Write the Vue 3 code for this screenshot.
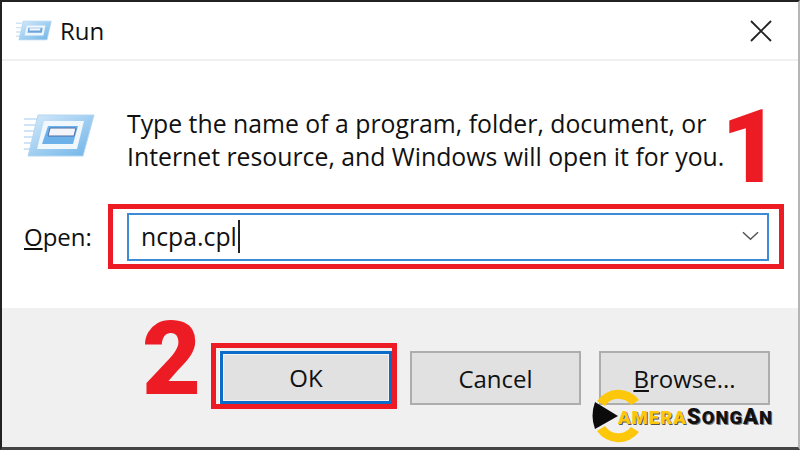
<template>
  <div class="dialog">
    <header class="titlebar">
      <svg class="run-icon small" viewBox="0 0 50 32">
        <defs>
          <linearGradient id="rg1" x1="0" y1="0" x2="1" y2="1">
            <stop offset="0" stop-color="#d6eafa" />
            <stop offset="1" stop-color="#6fb4e8" />
          </linearGradient>
        </defs>
        <path d="M0 6 H8 M0 12 H7 M0 18 H6 M0 24 H5" stroke="#cfe4f6" stroke-width="2" />
        <path d="M10 3 H49 L43 29 H4 Z" fill="url(#rg1)" stroke="#a6cfee" />
        <path d="M15 9 H41 L38 23 H12 Z" fill="#eef7fd" />
        <path d="M17 12 H37 L36 19 H16 Z" fill="#6ba5de" />
        <path d="M19 13 H34 L33.5 16 H18.5 Z" fill="#f3f6fa" />
      </svg>
      <span class="title">Run</span>
      <svg class="close" viewBox="0 0 22 22">
        <path d="M1 1 L21 21 M21 1 L1 21" stroke="#222" stroke-width="1.8" fill="none" />
      </svg>
    </header>

    <section class="content">
      <div class="intro">
        <svg class="run-icon big" viewBox="0 0 72 44">
          <defs>
            <linearGradient id="rg2" x1="0" y1="0" x2="1" y2="1">
              <stop offset="0" stop-color="#d6eafa" />
              <stop offset="1" stop-color="#6db3e8" />
            </linearGradient>
          </defs>
          <path d="M0 5 H14 M0 11 H12 M0 17 H11 M0 23 H9 M0 29 H8 M0 35 H6" stroke="#cfe4f6" stroke-width="2" />
          <path d="M14 1 H70 L59 42 H4 Z" fill="url(#rg2)" stroke="#b3d6f1" />
          <path d="M20 7 H60 L53 35 H13 Z" fill="#f1f8fd" />
          <path d="M24 12 H54 L49 30 H18 Z" fill="#6db1ea" />
          <path d="M26 14 H52 L50 22 H24 Z" fill="#f3f5fa" stroke="#4d6ea3" />
        </svg>
        <p class="message">Type the name of a program, folder, document, or<br />Internet resource, and Windows will open it for you.</p>
      </div>
      <div class="open-row">
        <label class="open-label"><u>O</u>pen:</label>
        <div class="red-box field-mark">
          <div class="combo">
            <span class="value">ncpa.cpl</span><span class="caret"></span>
            <svg class="chevron" viewBox="0 0 18 10">
              <path d="M1 1 L9 8.5 L17 1" stroke="#555" stroke-width="1.6" fill="none" />
            </svg>
          </div>
        </div>
      </div>
      <span class="step one">1</span>
    </section>

    <footer class="actions">
      <span class="step two">2</span>
      <div class="red-box ok-mark">
        <button class="btn ok">OK</button>
      </div>
      <button class="btn">Cancel</button>
      <button class="btn"><u>B</u>rowse...</button>

      <div class="brand">
        <svg class="brand-mark" viewBox="0 0 54 54">
          <path d="M6 12 A26 26 0 0 1 48 11 L40 16 A16 16 0 0 0 14 17 Z" fill="#fdc70c" />
          <path d="M6 42 A26 26 0 0 0 48 43 L40 38 A16 16 0 0 1 14 37 Z" fill="#fdc70c" />
          <path d="M4 13 L27 27 L4 40 Q-1 27 4 13 Z" fill="#0b0b0b" />
        </svg>
        <span class="brand-text"><span class="yellow">AMERA</span><span class="dark"><span class="cap">S</span>ONG<span class="cap">A</span>N</span></span>
      </div>
    </footer>
  </div>
</template>

<script setup>
</script>

<style>
html, body {
  margin: 0;
  background: #fff;
}
</style>

<style scoped>
.dialog {
  width: 800px;
  height: 450px;
  box-sizing: border-box;
  border-top: 2px solid #222;
  border-left: 2px solid #222;
  border-right: 2px solid #b5b5b5;
  border-bottom: 3px solid #444;
  display: flex;
  flex-direction: column;
  overflow: hidden;
  font-family: "Open Sans", "Noto Sans", sans-serif;
  color: #111;
  background: #fff;
}

.titlebar {
  height: 57px;
  flex: none;
  display: flex;
  align-items: center;
  padding: 0 26px 0 14px;
  border-bottom: 2px solid #f0f0f0;
}

.run-icon {
  filter: blur(0.4px);
}

.run-icon.small {
  width: 36px;
  height: 23px;
}

.title {
  margin-left: 8px;
  font-size: 24px;
}

.close {
  margin-left: auto;
  width: 22px;
  height: 22px;
}

.content {
  flex: 1;
  position: relative;
  display: flex;
  flex-direction: column;
}

.intro {
  display: flex;
  align-items: flex-start;
  padding: 46px 0 0 22px;
}

.run-icon.big {
  width: 72px;
  height: 44px;
  margin-top: 7px;
}

.message {
  margin: 0 0 0 31px;
  font-size: 24.8px;
  line-height: 33px;
  white-space: nowrap;
}

.open-row {
  display: flex;
  align-items: center;
  margin-top: 31px;
  padding-left: 22px;
}

.open-label {
  font-size: 24px;
  width: 84px;
}

.red-box {
  border: 5px solid #ed1c24;
  box-sizing: border-box;
}

.field-mark {
  width: 676px;
  height: 65px;
  padding: 4px 10px 3px 14px;
}

.combo {
  height: 100%;
  box-sizing: border-box;
  border: 2px solid #3d8bd4;
  display: flex;
  align-items: center;
  padding: 0 8px 2px 12px;
}

.value {
  font-size: 24.8px;
}

.caret {
  width: 2px;
  height: 33px;
  margin-left: 1px;
  background: #222;
}

.chevron {
  margin-left: auto;
  width: 17px;
  height: 10px;
}

.step {
  position: absolute;
  font-family: Roboto, "Liberation Sans", sans-serif;
  font-weight: 900;
  color: #ed1c24;
  font-size: 102px;
  line-height: 1;
}

.step.one {
  right: 18px;
  top: 35px;
}

.actions {
  flex: none;
  height: 139px;
  background: #f0f0f0;
  display: flex;
  align-items: flex-start;
  padding: 43px 0 0 209px;
  gap: 18px;
  box-sizing: border-box;
  position: relative;
}

.step.two {
  left: 140px;
  top: 0;
}

.ok-mark {
  width: 186px;
  height: 66px;
  margin-top: -8px;
  margin-right: -5px;
  padding: 3px 0 0 4px;
}

.btn {
  width: 171px;
  height: 54px;
  box-sizing: border-box;
  border: 2px solid #adadad;
  background: #e1e1e1;
  font-family: inherit;
  font-size: 24px;
  color: #111;
  padding: 0;
}

.btn.ok {
  width: 172px;
  height: 53px;
  border: 3px solid #0a6cc8;
  outline: none;
  box-shadow: inset 0 0 0 1px #f4f4f4, -1px 0 0 #fff;
}

.brand {
  position: absolute;
  left: 589px;
  top: 81px;
  display: flex;
  align-items: center;
}

.brand-mark {
  width: 54px;
  height: 54px;
}

.brand-text {
  margin-left: -27px;
  font-family: Roboto, "Liberation Sans", sans-serif;
  font-weight: 900;
  font-size: 18.5px;
  letter-spacing: 1px;
  white-space: nowrap;
}

.cap {
  font-size: 22px;
}

.yellow {
  color: #fdc70c;
  text-shadow: 1px 1px 0 #555;
}

.dark {
  color: #111;
  text-shadow: 1px 1px 0 #777;
}
</style>
